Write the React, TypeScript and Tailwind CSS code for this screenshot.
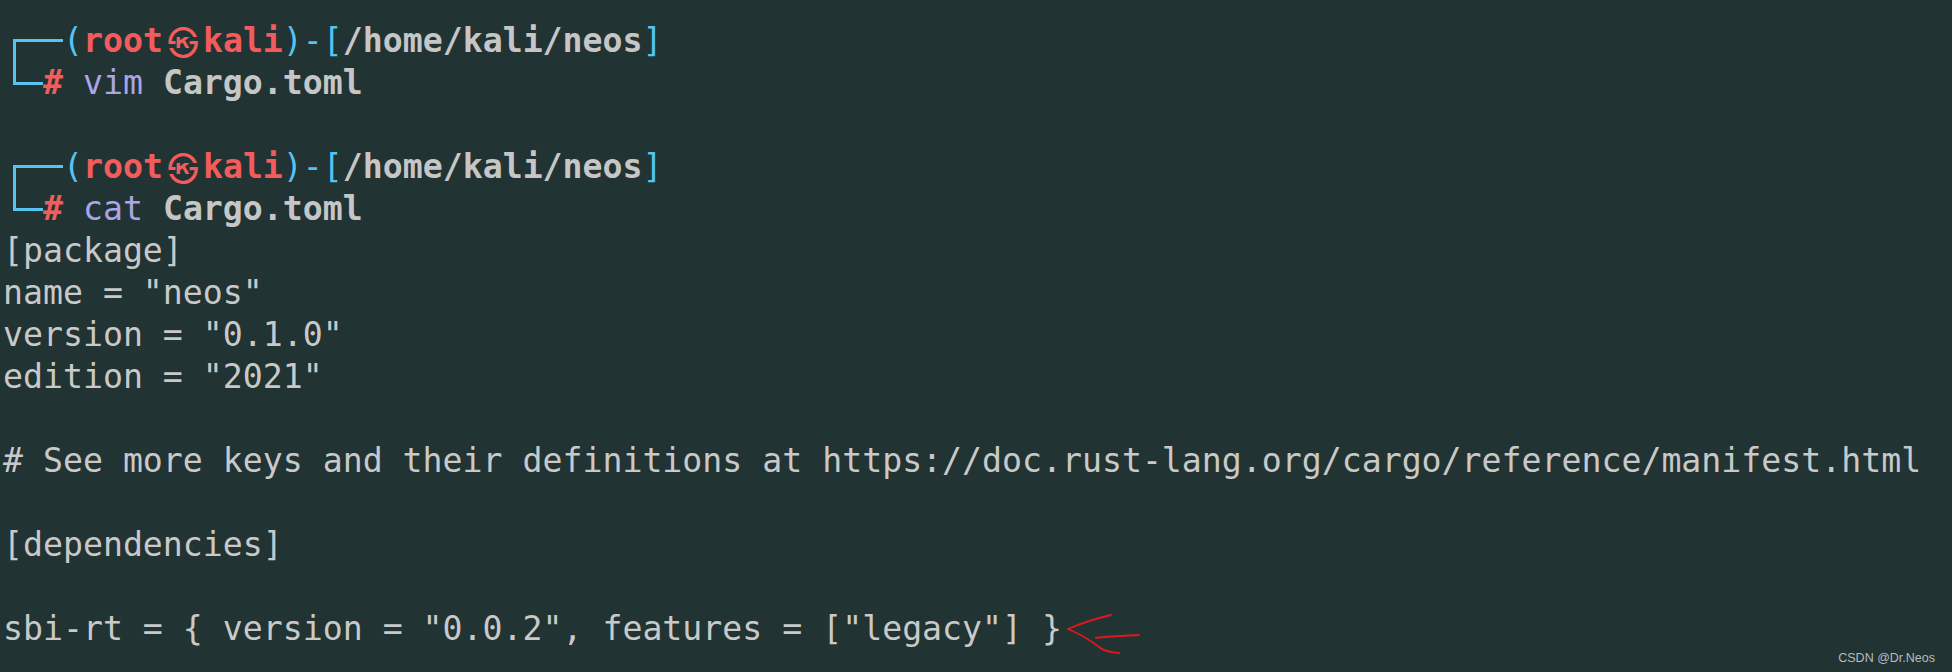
import React from "react";

const CY = "text-[#56c3f0]";
const RD = "text-[#f25c5c] font-bold";
const GB = "text-[#c6c6c6] font-bold";

function PromptTop() {
  return (
    <div className="flex h-[42px] leading-[42px] whitespace-pre">
      <div className="w-[60px] shrink-0 flex flex-col">
        <div className="ml-[9.5px] mt-[18.5px] flex-1 border-l-[3px] border-t-[3px] border-[#56c3f0]" />
      </div>
      <span className={CY}>(</span>
      <span className={RD}>root</span>
      <span className={`${RD} inline-block w-[40px] text-center font-['Noto_Sans_CJK_KR',sans-serif] text-[31px]`}>㉿</span>
      <span className={RD}>kali</span>
      <span className={CY}>)-[</span>
      <span className={GB}>/home/kali/neos</span>
      <span className={CY}>]</span>
    </div>
  );
}

function PromptBottom({ cmd }: { cmd: string }) {
  return (
    <div className="flex h-[42px] leading-[42px] whitespace-pre">
      <div className="w-[40px] shrink-0 flex flex-col">
        <div className="ml-[9.5px] h-[22.5px] w-[30.5px] border-l-[3px] border-b-[3px] border-[#56c3f0]" />
      </div>
      <span className={RD}>#</span>
      <span> </span>
      <span className="text-[#aba4e6]">{cmd}</span>
      <span> </span>
      <span className={GB}>Cargo.toml</span>
    </div>
  );
}

function Line({ children }: { children?: React.ReactNode }) {
  return <div className="h-[42px] leading-[42px] whitespace-pre">{children}</div>;
}

export default function App() {
  return (
    <div className="relative w-[1952px] h-[672px] overflow-hidden bg-[#223333] text-[#c9c9c9] font-['DejaVu_Sans_Mono',monospace] text-[33.2px] pl-[3px] pt-[20px]">
      <PromptTop />
      <PromptBottom cmd="vim" />
      <Line />
      <PromptTop />
      <PromptBottom cmd="cat" />
      <Line>[package]</Line>
      <Line>name = "neos"</Line>
      <Line>version = "0.1.0"</Line>
      <Line>edition = "2021"</Line>
      <Line />
      <Line># See more keys and their definitions at https://doc.rust-lang.org/cargo/reference/manifest.html</Line>
      <Line />
      <Line>[dependencies]</Line>
      <Line />
      <div className="flex h-[42px] leading-[42px] whitespace-pre">
        <span>sbi-rt = {"{"} version = "0.0.2", features = ["legacy"] {"}"}</span>
        <svg width="90" height="42" viewBox="0 0 90 42" className="overflow-visible shrink-0" fill="none">
          <path d="M49 7 C 36 10, 20 15, 6 21 C 18 26, 28 32, 37 39 C 42 44, 50 44, 57 45" stroke="#e3161e" strokeWidth="1.8" strokeLinecap="round" strokeLinejoin="round" />
          <path d="M34 30 C 48 28, 62 28, 77 27" stroke="#e3161e" strokeWidth="1.8" strokeLinecap="round" />
        </svg>
      </div>
      <div className="absolute right-[17px] bottom-[8px] font-['Liberation_Sans',sans-serif] text-[12.5px] leading-none text-[#b6bcbc]">
        CSDN @Dr.Neos
      </div>
    </div>
  );
}
